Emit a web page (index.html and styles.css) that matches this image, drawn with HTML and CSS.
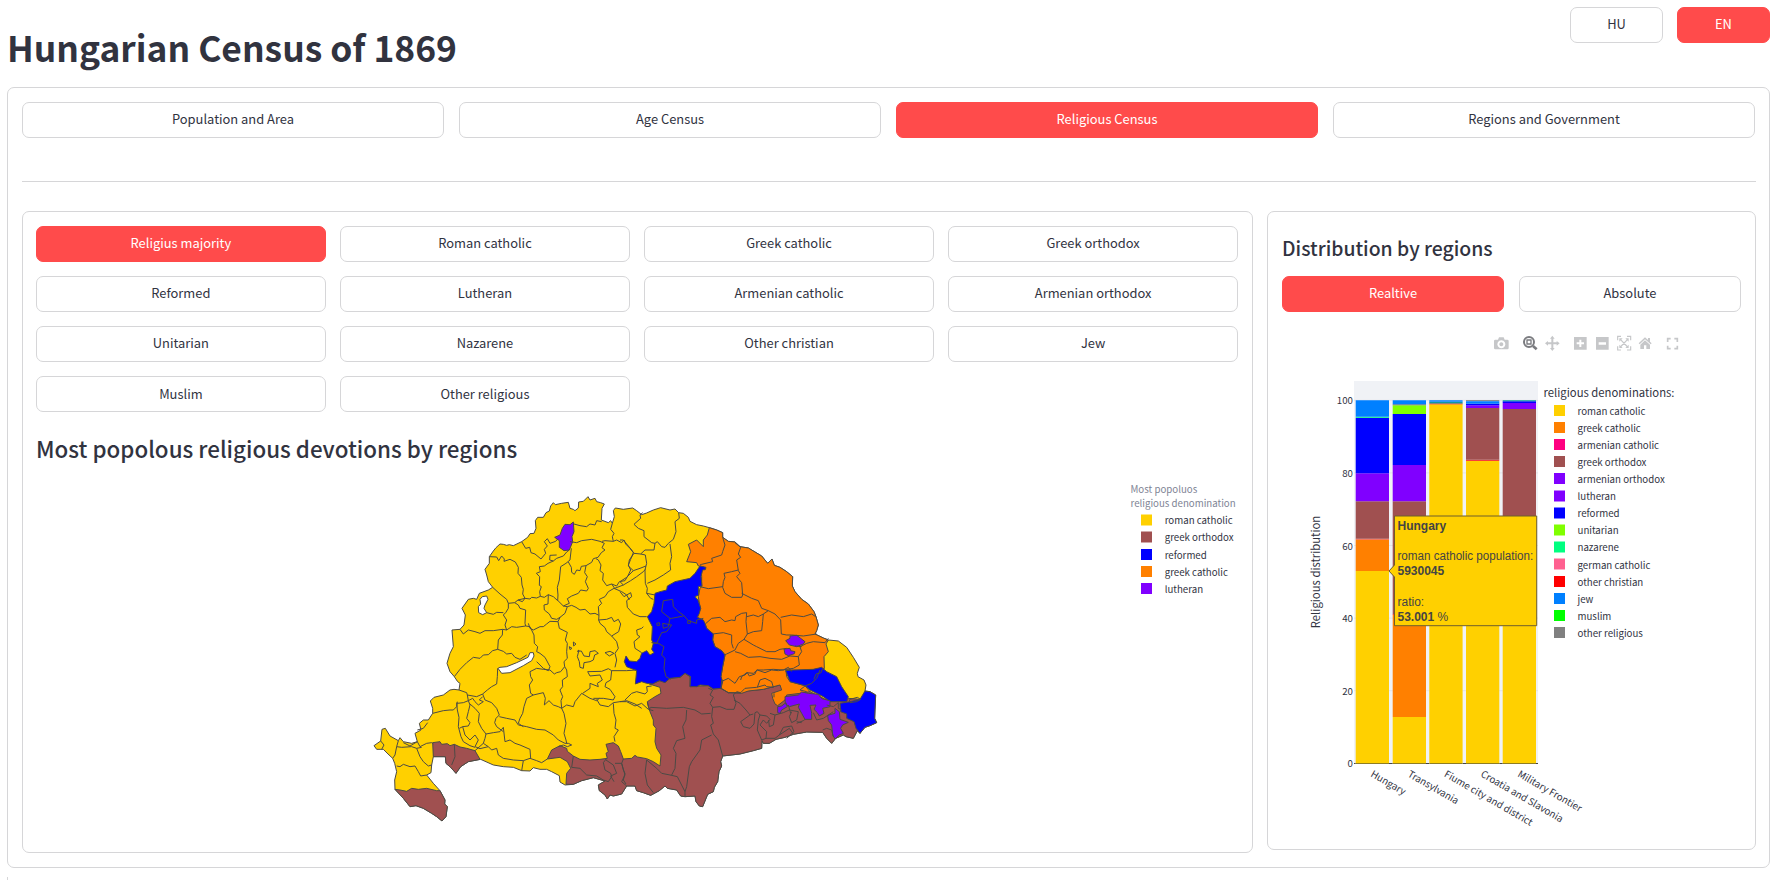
FILE: index.html
```html
<!DOCTYPE html>
<html lang="en">
<head>
<meta charset="utf-8">
<title>Hungarian Census of 1869</title>
<link rel="stylesheet" href="styles.css">
</head>
<body>
<header class="top">
  <h1 class="title">Hungarian Census of 1869</h1>
  <div class="langs"><button class="btn">HU</button><button class="btn on">EN</button></div>
</header>
<main class="outer">
  <nav class="tabs">
    <button class="btn">Population and Area</button><button class="btn">Age Census</button><button class="btn on">Religious Census</button><button class="btn">Regions and Government</button>
  </nav>
  <hr class="rule">
  <div class="columns">
    <section class="panel panel-map">
      <div class="filters">
        <button class="btn on">Religius majority</button><button class="btn">Roman catholic</button><button class="btn">Greek catholic</button><button class="btn">Greek orthodox</button>
        <button class="btn">Reformed</button><button class="btn">Lutheran</button><button class="btn">Armenian catholic</button><button class="btn">Armenian orthodox</button>
        <button class="btn">Unitarian</button><button class="btn">Nazarene</button><button class="btn">Other christian</button><button class="btn">Jew</button>
        <button class="btn">Muslim</button><button class="btn">Other religious</button>
      </div>
      <h2 class="map-title">Most popolous religious devotions by regions</h2>
      <svg class="map" viewBox="36 480 1203 360">
        <g transform="translate(360 480) scale(.33333)" class="land">
          <path class="y" d="M388 230L400 213 408 203 420 192 430 193 440 196 448 194 460 197 485 185 503 172 510 161 522 160 528 145 526 122 533 112 550 112 558 98 568 93 572 78 580 68 586 74 605 70 625 67 630 85 640 88 645 92 655 84 656 66 670 64 684 50 690 60 705 55 710 65 722 68 733 72 726 85 724 120 745 128 752 122 757 130 763 110 760 92 766 84 790 88 818 84 830 92 845 104 860 99 880 90 902 83 930 90 945 87 956 98 970 100 985 112 990 124 1010 134 1030 138 1048 143 1070 150 1088 158 1088 172 1105 184 1125 186 1140 200 1165 204 1185 216 1205 228 1223 250 1236 237 1243 256 1260 262 1280 275 1298 290 1297 318 1305 335 1325 358 1345 372 1362 395 1368 410 1375 435 1370 452 1365 462 1390 474 1405 480 1435 483 1460 502 1480 532 1498 562 1492 580 1494 590 1512 600 1518 615 1515 633 1530 635 1547 645 1545 690 1544 715 1550 728 1530 737 1515 742 1500 760 1492 752 1480 775 1458 770 1450 765 1427 775 1415 790 1400 775 1388 757 1340 756 1300 763 1275 772 1248 778 1228 790 1210 790 1206 782 1205 805 1180 812 1140 822 1088 828 1082 845 1085 858 1077 875 1073 905 1063 922 1060 935 1043 943 1028 980 1018 978 1008 965 1005 948 975 950 962 948 950 930 922 925 915 918 898 932 872 946 850 938 830 932 825 918 800 918 785 942 760 948 750 945 742 957 735 945 718 932 715 915 735 903 700 893 665 902 640 913 615 915 600 906 598 887 575 875 560 868 540 868 520 863 510 873 485 872 460 862 430 860 400 855 362 838 325 845 302 860 288 880 272 862 258 850 256 830 220 830 215 855 213 878 200 885 220 910 240 932 255 960 254 972 262 980 258 1010 246 1023 230 1010 215 1000 190 985 168 977 150 980 130 955 105 928 104 900 110 875 104 850 98 835 84 822 70 808 50 808 42 797 62 783 66 748 76 745 90 768 115 782 120 773 130 785 155 790 172 785 165 760 183 750 178 730 190 720 205 720 218 700 218 685 211 663 222 652 250 645 270 630 282 628 297 630 300 610 293 605 283 590 270 575 261 550 270 520 280 500 276 450 300 448 312 435 316 405 306 385 325 358 340 355 350 358 358 340 385 330 398 322 385 305 380 285 375 268 388 250Z"/>
          <path class="b" d="M105 928L120 930 140 934 155 925 175 928 200 925 230 932 240 932 255 960 254 972 262 980 258 1010 246 1023 230 1010 215 1000 190 985 168 977 150 980 130 955Z"/>
          <path class="b" d="M218 788L240 785 245 793 262 791 270 797 283 793 300 801 320 805 345 812 360 838 325 845 302 860 288 880 272 862 258 850 256 830 220 830Z"/>
          <path class="b" d="M868 612L900 602 930 595 960 592 975 580 990 590 990 620 1045 617 1060 627 1083 625 1105 638 1210 628 1260 615 1340 630 1410 665 1465 655 1500 658 1530 700 1500 760 1492 752 1480 775 1458 770 1450 765 1427 775 1415 790 1400 775 1388 757 1340 756 1300 763 1275 772 1248 778 1228 790 1210 790 1206 782 1205 805 1180 812 1140 822 1088 828 1082 845 1085 858 1077 875 1073 905 1063 922 1060 935 1043 943 1028 980 1018 978 1008 965 1005 948 975 950 962 948 950 930 922 925 915 918 898 932 872 946 850 938 830 932 825 918 800 918 785 942 760 948 750 945 742 957 735 945 718 932 715 915 735 903 700 893 665 902 640 913 618 913 620 880 632 865 622 845 600 832 562 837 575 810 600 797 620 805 622 814 640 828 660 838 690 840 720 838 742 835 738 820 745 815 738 793 760 788 775 798 782 815 790 837 815 835 825 826 832 831 860 836 880 845 900 858 903 825 890 805 885 785 888 745 880 735 880 720 870 695 865 680 862 665 885 650 903 640 900 622Z"/>
          <path class="o" d="M1048 143L1070 150 1088 158 1088 172 1105 184 1125 186 1140 200 1165 204 1185 216 1205 228 1223 250 1236 237 1243 256 1260 262 1280 275 1298 290 1297 318 1305 335 1325 358 1345 372 1362 395 1368 410 1375 435 1370 452 1365 462 1390 474 1405 480 1398 492 1405 515 1392 530 1393 566 1365 568 1320 572 1278 570 1280 590 1290 605 1335 617 1350 635 1320 640 1280 645 1275 660 1253 677 1245 672 1238 655 1235 640 1265 630 1260 615 1210 628 1165 633 1145 640 1105 638 1083 625 1085 600 1083 590 1088 560 1095 525 1085 512 1065 500 1058 480 1060 462 1040 445 1035 430 1012 412 1022 385 1018 370 1015 350 1020 325 1025 320 1025 290 1024 275 1030 260 1015 258 1010 248 980 245 992 215 985 193 1010 180 1030 200 1030 180 1042 165Z"/>
          <path class="u" d="M1020 258L1038 262 1036 269 1028 270 1023 290 1026 318 1015 320 1016 345 1005 350 1014 360 1018 372 1022 385 1018 400 1012 412 1030 420 1035 430 1040 445 1060 462 1058 480 1065 500 1085 512 1095 525 1088 560 1083 590 1088 605 1083 625 1060 627 1045 617 1020 615 1010 620 990 620 992 590 975 580 960 592 930 595 915 608 898 602 878 612 860 610 845 605 826 612 830 572 800 560 793 545 798 528 808 543 830 545 840 535 845 520 860 512 870 525 882 518 875 508 880 490 875 480 877 440 862 410 875 395 882 370 885 340 900 335 920 330 922 318 945 305 990 295 1005 280Z"/>
          <path class="u" d="M1277 572L1300 570 1360 568 1385 562 1400 575 1430 590 1445 620 1465 650 1460 665 1410 665 1390 650 1350 630 1335 617 1290 605Z"/>
          <path class="u" d="M1440 670L1470 665 1500 658 1515 633 1530 635 1547 645 1545 690 1544 715 1550 728 1530 737 1515 742 1500 760 1488 745 1482 725 1460 715 1460 702 1442 695Z"/>
          <path class="p" d="M640 126L642 155 636 170 638 185 628 210 612 212 598 202 598 182 584 172 600 165 607 145 615 133 630 134Z"/>
          <path class="p" d="M1277 482L1290 475 1290 468 1310 466 1322 475 1335 485 1330 492 1310 500 1288 495ZM1272 507L1290 505 1292 512 1305 515 1303 521 1285 527 1275 522Z"/>
          <path class="p" d="M1253 680L1265 678 1278 668 1282 680 1265 690 1260 700 1253 698ZM1275 650L1315 645 1325 636 1345 640 1375 643 1385 656 1410 662 1410 680 1388 685 1392 700 1378 708 1372 698 1362 688 1368 675 1350 676 1355 700 1355 718 1335 718 1325 700 1315 682 1318 672 1288 680 1276 672ZM1425 685L1425 700 1403 706 1405 722 1415 735 1418 765 1425 777 1438 765 1450 760 1442 745 1448 735 1465 727 1440 718 1438 695Z"/>
          <path class="w" d="M367 350L380 348 384 358 375 375 372 385 380 398 368 404 356 398 355 380 362 372 360 358ZM414 565L425 580 450 578 490 557 515 542 522 528 520 518 510 518 504 532 470 548 440 560 420 562Z"/>
          <g class="n">
            <path d="M388 230L410 231 416 242 425 228 433 237 432 244 450 238 466 246 475 262 474 280 484 292 486 315 490 328 488 342 495 355 487 365 474 360 464 368 445 370 440 358 420 342 398 322M485 185L497 205 509 202 513 218 525 222 543 237 557 220 553 208 562 198 553 185 562 176 570 190 587 184 594 176M495 355L510 357 515 352 530 354 541 349 539 335 544 320 538 316 539 290 529 280 541 275 538 260 553 258 564 250 580 243 590 235 610 228 620 216 628 210M590 225L570 226 569 240 580 243M541 349L553 352 565 344 580 350 593 362 594 345 592 322 598 300 602 260 618 250 630 240 634 205M630 185L650 188 665 182 695 178 720 184 733 190 726 203 735 210 724 218 714 232 700 236 695 247 678 257 664 259 660 272 650 270 643 283 635 277 634 262 625 246M642 132L660 137 680 140 690 132 705 135 710 122 725 125M757 130L752 148 762 160 757 170 760 184 735 182 726 184M760 184L770 180 785 188 792 180 797 192 810 205 820 218 812 238 805 255 812 270 805 285 795 302 778 305 770 318 755 312 740 317 728 300 730 280 720 272 723 255 715 240 708 236M678 257L674 278 682 290 676 305 685 325 680 333 662 330 655 340 635 348 622 356 628 370 610 378 594 362M610 378L622 380 635 376 648 382 660 390 675 388 690 402 705 400 717 406 715 380 725 370 718 358 735 350 745 335 762 325 785 335 800 345 808 360"/>
            <path d="M755 312L764 325 790 315 812 302 830 290 850 275 856 268M717 406L716 420 740 418 755 412 762 425 775 418 782 432 776 455 755 468 740 455 735 443 720 430 716 420M755 468L770 485 775 505 765 520 770 540 765 562M622 380L615 400 600 412 594 425 570 424 560 432 550 440 540 440 520 450 510 445 505 430M565 344L564 372 552 375 553 390 568 402 575 415 590 418 600 412M464 368L475 375 480 385 497 390 495 430 497 438 470 442 455 440 440 450 435 435 440 420 430 405 437 398 445 385 445 370M474 360L495 355M430 398L410 397 400 403 380 398M300 448L310 462 325 450 345 455 360 460 375 452 400 452 428 448 440 450M428 448L427 465 415 480 413 508 398 512 385 524 370 525 360 535 340 532 320 548 300 568 283 590M413 508L430 514 440 522 455 520 465 532 480 538 500 525M497 438L510 440 522 465 523 490 533 500 530 515 540 520 555 532 570 560 565 572 550 565 530 545M594 425L598 445 622 457 616 480 622 490 620 515 622 535 612 545 614 560 602 575 590 578 583 582 570 570M570 570L550 568 530 565 510 575 512 590 518 600 508 615 512 640 520 645 550 638 556 655 553 675 567 662 580 675 595 680 605 685 603 662 608 650 600 630 608 620 607 600 622 590 620 570 614 560M520 645L500 655 492 680 488 700 480 715 475 730M413 565L412 590 410 612 395 620 382 630 368 642 350 650 322 645 320 638 297 630M368 642L375 660 395 668 410 685 418 705 408 715 404 728 410 740 430 755M322 645L325 662 310 668 292 670M218 700L250 692 270 690 280 690 290 680 292 665M290 668L292 690 297 712 295 740 303 770 310 785 330 797 345 802M325 662L330 675 325 695 320 715 330 728 325 738 308 740 298 745M308 740L315 765 330 780 345 765 355 780 345 800M325 662L338 655 345 665 355 675 370 665 358 660 368 650M330 672L345 685 358 700 355 725 365 745 378 762 375 775 370 790 385 800M378 762L400 758 420 755 430 742 435 785 450 780 465 790 480 795 510 808 512 835"/>
            <path d="M418 710L440 715 465 720 475 735 500 740 530 748 555 750 580 765 595 780 615 790 625 790 635 795 622 800 610 795 595 800M475 730L490 740M605 685L620 675 640 680 645 665 665 640 690 655 710 662 718 655M605 685L612 700 618 730 612 760 618 780 620 790M345 800L360 806 385 800 395 810 410 805 415 825 430 835 460 840 490 842 510 835 530 842 545 848 562 837M490 842L485 872M370 790L345 812M172 785L180 800 200 790 215 788 220 792M115 782L110 800 125 802 155 800 170 805 185 802M62 783L72 795 65 808M170 805L180 830 190 845 205 858 215 855M110 800L105 825 98 835M110 858L120 860 130 853 150 860 165 858 175 875 182 888 200 885M172 785L150 798 130 788M172 750L190 745 203 728M657 510L652 530 658 545 660 562 670 565 672 548 690 545 700 540 704 525 715 520 705 512 690 515 688 530 672 528 664 513 652 514ZM628 500L636 505 630 509ZM640 486L648 492 641 498ZM735 518L750 514 762 520 748 528ZM683 575L725 574 745 566 755 572 800 572 828 570M683 575L690 588 720 585 727 600 712 610 715 620 690 610 690 625 668 640M755 572L752 600 738 608 735 620 750 628 765 650 760 660 730 655 700 655M710 658L720 675 745 680 760 668 800 662 825 672 845 685M760 670L762 700 768 720 765 745 775 750 762 770 765 785"/>
            <path d="M640 828L635 862 660 865 680 885 710 888 730 900 745 905 755 890 752 880 735 870 730 848 740 835M738 840L760 855 770 880 752 888 762 905M785 850L790 870 795 880 790 900 798 912M765 850L785 850 790 837M283 793L285 830 275 855"/>
          </g>
          <g class="n" transform="translate(780)">
            <path d="M68 98L60 105 62 115 42 133 55 145 72 152 72 170 95 188 105 190 112 185 125 200 135 202 145 190 160 178 168 155 165 125 178 115 176 98M105 190L102 210 75 210 62 222 42 220 35 210 20 192 10 180 0 180M62 222L76 225 80 250 75 270 76 310 82 325 80 340 105 345M42 220L28 240 25 258 40 272 60 265 78 258M40 272L20 292 0 305M150 192L155 230 150 250 152 270 130 285 105 300 82 310M80 340L92 355 100 358M0 335L12 350 32 338 35 350 20 362 22 382 40 402 60 410 80 410M70 440L65 445 50 450 52 465 60 470 42 485 45 505 65 518M0 305L10 315"/>
            <path d="M308 172L315 195 308 215 305 225 275 235 278 245 245 253 240 255M345 188L362 202 355 222 362 232 350 240 355 272 360 280 350 290 365 308 368 345 365 352 335 352 315 340 308 322 310 305 315 292 312 280 335 275 355 270M240 320L265 326 308 320M365 340L395 355 415 362 425 385 445 392 430 402 428 425 425 452 400 455 382 462 372 478 355 490 345 510 320 522M445 392L465 402 482 420 484 462 500 465 515 465M482 412L515 405 550 410 575 402 587 410M258 430L275 415 300 412 315 425 335 420 345 422 347 410 365 400 380 398 378 425 382 462M380 410L400 405 415 410 430 402M278 462L310 458 335 465 335 490 340 505M372 478L400 495 410 500 440 515 465 515 480 508 500 505M345 515L362 520 385 532 420 530 450 535 485 538 510 528 535 530 545 515 540 500 560 490 580 485 615 488 625 475M515 465L550 468 590 462M535 530L538 555 520 565 500 568 475 572 455 570 435 578 412 570 400 580 380 578 365 590 362 600M320 522L312 525M545 500L525 498"/>
            <path d="M130 362L158 358 160 380 175 395 190 405 205 422 230 430 230 420 250 415M130 362L125 395 150 415 155 415 190 408M150 415L145 440 130 445 128 430 155 435 140 455 125 458 110 490 95 488M95 488L115 490 132 500 125 525 135 535 132 565 138 590 152 598M110 430L118 428 120 435 112 437ZM203 422H211V430H203ZM582 598L588 582 603 578 608 565"/>
          </g>
          <g class="n" transform="translate(780 540)">
            <path d="M303 65L325 55 345 70 358 50 375 45 382 38 388 48 405 42 410 30 430 30 460 28 490 30 505 22M305 60L303 85 325 98 362 98 375 85 410 82 435 75 440 80 460 82 455 65 435 55 420 60 412 82M15 120L35 100 50 95 75 102 82 95 80 80 95 78M0 125L20 125 45 138 65 130 85 148 100 152M82 128L88 148 92 142 140 145 190 142 225 150 245 162 272 160M278 90L270 105 280 112 270 130 278 142 275 170 280 190 272 195 280 222 295 240 308 288M278 142L300 140 320 148 342 148 348 130 340 105 350 95M278 90L265 85M342 120L360 130 378 150 390 165 362 185 370 200 390 205 402 192 405 158 412 155 420 165 415 180 412 210 425 240M390 165L400 162M200 150L198 180 188 200 195 235 170 242 160 265 168 280 165 325 155 345M275 225L245 240 240 270 215 305 208 320 200 380 195 395 172 350 150 345 125 340 110 325 80 300M80 300L75 340 82 375 100 398M5 310L15 345 5 365 20 378M195 395L195 408M420 165L440 168 450 178 440 190 430 180 420 195 440 215 438 235 425 240M450 160L465 165 460 195 448 200 446 180M350 95L362 98M465 165L490 158 508 150 535 155 530 180 515 188 508 170 515 155M438 235L465 235 478 225 490 202 515 198 522 215 500 235M478 225L508 205 520 222M530 190L550 182 555 178M608 210L620 205 635 210 640 230M505 135L512 160M530 185L545 188M620 135L640 140 655 128 655 145 665 150M688 118L690 128 710 125 722 118 712 112 690 118M580 158L590 180 610 175 640 155"/>
            <path d="M505 22L515 35M462 100L462 112M555 78L540 90 560 95M600 30L590 55 575 70 555 78"/>
          </g>
        </g>
        <g class="legend">
          <text class="muted" x="1130.500" y="493">Most popoluos</text><text class="muted" x="1130.500" y="507">religious denomination</text>
          <path class="y" d="M1141 514.500h11v11h-11z"/><text x="1164.700" y="524">roman catholic</text>
          <path class="b" d="M1141 531.500h11v11h-11z"/><text x="1164.700" y="541">greek orthodox</text>
          <path class="u" d="M1141 549h11v11h-11z"/><text x="1164.700" y="558.500">reformed</text>
          <path class="o" d="M1141 566h11v11h-11z"/><text x="1164.700" y="575.500">greek catholic</text>
          <path class="p" d="M1141 583h11v11h-11z"/><text x="1164.700" y="592.500">lutheran</text>
        </g>
      </svg>
    </section>
    <section class="panel panel-chart">
      <h3 class="chart-title">Distribution by regions</h3>
      <div class="modes"><button class="btn on">Realtive</button><button class="btn">Absolute</button></div>
      <svg class="chart" viewBox="1282 324 459 516">
        <g transform="translate(1480 325) scale(.33333)" fill="#c6c7c9">
          <path fill-rule="evenodd" d="M46 44h8l3-7h14l3 7h8q4 0 4 4v21q0 4-4 4H46q-4 0-4-4V48q0-4 4-4zM64 46a12 12 0 1 0 .1 0zM64 52a6 6 0 1 1-.1 0z"/>
          <g fill="none" stroke="#7b7c80"><circle cx="147" cy="51" r="15" stroke-width="6"/><path d="M159 63l11 10" stroke-width="8"/><path d="M141 45h12v12h-12z" stroke-width="4"/></g>
          <path d="M214 38h6v14h14v6h-14v14h-6V58h-14v-6h14zM217 32l7 9h-14zM217 78l-7-9h14zM195 55l9-7v14zM239 55l-9 7V48z"/>
          <path fill-rule="evenodd" d="M282 36h38v38h-38zM298 44v8h-8v6h8v8h6v-8h8v-6h-8v-8zM348 36h38v38h-38zM356 52v7h22v-7z"/>
          <path d="M413 46V34h10M441 34h11v12M452 64v11h-11M423 75h-10V64M421 43l22 23M443 43L421 66" fill="none" stroke="#c6c7c9" stroke-width="3.500"/><path d="M418 40h10l-10 10zM446 40v10l-10-10zM418 69V59l10 10zM446 69h-10l10-10z"/>
          <path d="M495 37l20 18-3 3-17-15-16 15-3-3zM504 39h6v11l-6-5zM495 46l15 13v13h-11V61h-7v11h-11V59z"/>
          <path d="M563 51V41h9M583 41h9v10M592 62v9h-9M572 71h-9v-9" fill="none" stroke="#c6c7c9" stroke-width="5"/>
        </g>
        <path fill="#f0f2f6" d="M1354 381h184v382.500h-184z"/>
        <path stroke="#e3e4e9" d="M1354 690.700h184M1354 618.100h184M1354 545.500h184M1354 472.900h184M1354 400.300h184"/>
        <g shape-rendering="geometricPrecision">
          <path class="y" d="M1355.700 571h33.300v192h-33.300zM1392.700 717h33.300v46h-33.300zM1429.300 404.700h33.300V763h-33.300zM1466 461h33.300v302H1466zM1502.700 600h33.300v163h-33.300z"/>
          <path class="o" d="M1355.700 539.500h33.300V571h-33.300zM1392.700 614.700h33.300V717h-33.300zM1429.300 404h33.300v.8h-33.300z"/>
          <path fill="#f63c3c" d="M1355.700 538.700h33.300v.9h-33.300zM1392.700 614h33.300v1h-33.300zM1466 459.700h33.300v1.300H1466z"/>
          <path class="b" d="M1355.700 501.300h33.300v37.400h-33.300zM1392.700 501.300h33.300V614h-33.300zM1429.300 403.200h33.300v.9h-33.300zM1466 408h33.300v51.700H1466zM1502.700 409h33.300v191h-33.300z"/>
          <path class="p" d="M1355.700 473.300h33.300v28h-33.300zM1392.700 465h33.300v36.300h-33.300zM1466 405.300h33.300v2.700H1466zM1502.700 403h33.300v6h-33.300z"/>
          <path class="u" d="M1355.700 417.700h33.300v55.600h-33.300zM1392.700 414h33.300v51h-33.300zM1466 403.700h33.300v1.600H1466zM1502.700 401.300h33.300v1.700h-33.300z"/>
          <path fill="#80ff00" d="M1392.700 405.300h33.300v8.700h-33.300z"/><path fill="#00ff80" d="M1355.700 416.800h33.300v1h-33.300z"/><path fill="#0d9aa0" d="M1429.300 401.700h33.300v1.500h-33.300zM1502.700 400.300h33.300v1h-33.300z"/>
          <path fill="#6f7175" d="M1392.700 404.300h33.300v1h-33.300zM1466 400.300h33.300v1H1466z"/>
          <path fill="#0080ff" d="M1355.700 400.300h33.300v16.500h-33.300zM1392.700 400.300h33.300v4h-33.300zM1429.300 400.300h33.300v1.400h-33.300zM1466 401.300h33.300v2.400H1466z"/>
        </g>
        <path stroke="#444" d="M1354 763.500h1.700M1389 763.500h3.700M1426 763.500h3.300M1462.600 763.500h3.400M1499.300 763.500h3.400M1536 763.500h2"/><path stroke="#8f7d22" d="M1355.700 763.500h33.300M1392.700 763.500h33.300M1429.300 763.500h33.300M1466 763.500h33.300M1502.700 763.500h33.300"/>
        <g class="ticks"><text x="1353" y="404.300">100</text><text x="1353" y="477">80</text><text x="1353" y="549.500">60</text><text x="1353" y="622.300">40</text><text x="1353" y="695">20</text><text x="1353" y="767.300">0</text></g>
        <text class="axis" transform="translate(1320 572) rotate(-90)">Religious distribution</text>
        <g class="legend">
          <text transform="translate(1370 776) rotate(30)">Hungary</text><text transform="translate(1407 776) rotate(30)">Transylvania</text><text transform="translate(1443.500 776) rotate(30)">Fiume city and district</text><text transform="translate(1480 776) rotate(30)">Croatia and Slavonia</text><text transform="translate(1517 776) rotate(30)">Military Frontier</text>
          <text class="legend-title" x="1543.500" y="396.700">religious denominations:</text>
          <path class="y" d="M1554 405h11v11h-11z"/><text x="1577.500" y="414.700">roman catholic</text>
          <path class="o" d="M1554 422h11v11h-11z"/><text x="1577.500" y="431.800">greek catholic</text>
          <path fill="#ff0080" d="M1554 439h11v11h-11z"/><text x="1577.500" y="448.800">armenian catholic</text>
          <path class="b" d="M1554 456h11v11h-11z"/><text x="1577.500" y="465.900">greek orthodox</text>
          <path class="p" d="M1554 473h11v11h-11z"/><text x="1577.500" y="483">armenian orthodox</text>
          <path class="p" d="M1554 490.500h11v11h-11z"/><text x="1577.500" y="500">lutheran</text>
          <path class="u" d="M1554 507.500h11v11h-11z"/><text x="1577.500" y="517">reformed</text>
          <path fill="#80ff00" d="M1554 524.500h11v11h-11z"/><text x="1577.500" y="534.200">unitarian</text>
          <path fill="#00ff80" d="M1554 541.500h11v11h-11z"/><text x="1577.500" y="551.200">nazarene</text>
          <path fill="#ff6090" d="M1554 558.500h11v11h-11z"/><text x="1577.500" y="568.500">german catholic</text>
          <path fill="#f00" d="M1554 576h11v11h-11z"/><text x="1577.500" y="585.500">other christian</text>
          <path fill="#0080ff" d="M1554 593h11v11h-11z"/><text x="1577.500" y="602.700">jew</text>
          <path fill="#0f0" d="M1554 610h11v11h-11z"/><text x="1577.500" y="619.800">muslim</text>
          <path fill="#808080" d="M1554 627h11v11h-11z"/><text x="1577.500" y="637">other religious</text>
        </g>
        <path class="y" stroke="#6f5f2c" d="M1389 571l5.500-6v-49h142.200v109.700h-142.200V577z"/>
        <g class="tip"><text class="bold" x="1397.500" y="530">Hungary</text><text x="1397.500" y="559.500" textLength="135.700" lengthAdjust="spacingAndGlyphs">roman catholic population:</text><text class="bold" x="1397.500" y="574.700">5930045</text><text x="1397.500" y="606">ratio:</text><text x="1397.500" y="620.700"><tspan class="bold">53.001</tspan> %</text></g>
      </svg>
    </section>
  </div>
</main>
<div class="next"></div>
</body>
</html>
```

FILE: styles.css
```css
* { box-sizing: border-box; }
html { overflow: hidden; }
body { margin: 0; padding: 7px 8px 0 7px; height: 880px; overflow: hidden; background: #fff; color: #31333f; font-family: "Noto Sans CJK SC", "Open Sans", sans-serif; }
.top { display: flex; justify-content: space-between; height: 80px; }
.title { margin: 13px 0 0; font-size: 35.400px; line-height: 54px; font-weight: 700; }
.langs { display: grid; grid-template-columns: 93px 93px; gap: 14px; height: 36px; }
.btn { height: 36px; padding: 0 0 1px; border: 1px solid #d6d6d8; border-radius: 7px; background: #fff; color: #31333f; font: 400 12.900px/1 "Noto Sans CJK SC", "Open Sans", sans-serif; }
.btn.on { background: #ff4b4b; border-color: #ff4b4b; color: #fff; }
.outer { height: 781px; padding: 14px 13px 14px 14px; border: 1px solid #d6d6d8; border-radius: 7px; }
.tabs { display: grid; grid-template-columns: repeat(4, 1fr); gap: 15px; padding-right: 1px; }
.rule { margin: 43px 0 29px; border: 0; border-top: 1px solid #d6d6d8; }
.columns { display: grid; grid-template-columns: 1231px 489px; justify-content: space-between; align-items: start; }
.panel { border: 1px solid #d6d6d8; border-radius: 7px; padding: 13px; }
.panel-map { height: 642px; }
.panel-chart { height: 639px; padding: 13px 14px; }
.filters { display: grid; grid-template-columns: repeat(4, 1fr); gap: 14.330px; padding: .5px 1px 0 0; }
.map-title { margin: 17.500px 0 0; font-size: 22.400px; line-height: 36px; font-weight: 500; }
.map { display: block; width: 1203px; height: 360px; margin-top: 14px; }
.chart-title { margin: 8px 0 13px; font-size: 19.400px; line-height: 30px; font-weight: 500; }
.modes { display: grid; grid-template-columns: 1fr 1fr; gap: 15px; }
.chart { display: block; width: 459px; height: 516px; margin-top: 12px; }
.y { fill: #ffd000; } .b { fill: #a05050; } .o { fill: #ff8000; } .u { fill: #00f; } .p { fill: #8000ff; } .w { fill: #fff; }
.land path { stroke: #4b4a45; stroke-width: 3; stroke-linejoin: round; }
.n path { fill: none; }
.legend { font-size: 9.700px; fill: #31333f; }
.muted { fill: #808495; }
.legend-title, .axis { font-size: 11.300px; fill: #31333f; }
.axis { text-anchor: middle; }
.ticks { font-size: 9.700px; text-anchor: end; fill: #31333f; }
.tip { font: 12px "Liberation Sans", Arial, sans-serif; fill: #444; }
.bold { font-weight: 700; }
.next { width: 1px; height: 3px; margin-top: 9px; background: #d6d6d8; }
```
